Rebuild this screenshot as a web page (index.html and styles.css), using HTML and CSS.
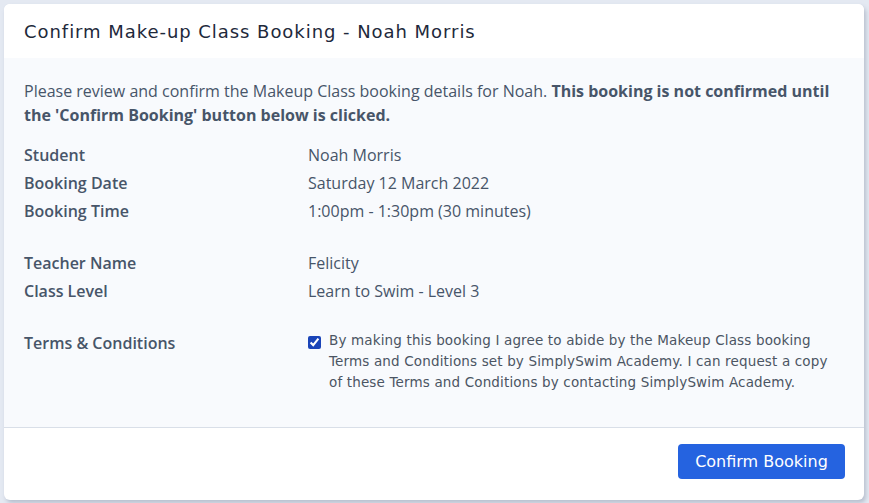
FILE: index.html
```html
<!DOCTYPE html>
<html lang="en">
<head>
    <meta charset="UTF-8">
    <meta name="viewport" content="width=device-width, initial-scale=1.0">
    <title>Confirm Make-up Class Booking</title>
    <link rel="stylesheet" href="styles.css">
</head>
<body>
    <div class="modal">
        <div class="modal-header">
            <h2>Confirm Make-up Class Booking - Noah Morris</h2>
        </div>

        <div class="modal-body">
            <p class="intro">Please review and confirm the Makeup Class booking details for Noah. <strong>This booking is not confirmed until the 'Confirm Booking' button below is clicked.</strong></p>

            <div class="details">
                <div class="row">
                    <div class="label">Student</div>
                    <div class="value">Noah Morris</div>
                </div>
                <div class="row">
                    <div class="label">Booking Date</div>
                    <div class="value">Saturday 12 March 2022</div>
                </div>
                <div class="row">
                    <div class="label">Booking Time</div>
                    <div class="value">1:00pm - 1:30pm (30 minutes)</div>
                </div>
            </div>

            <div class="details">
                <div class="row">
                    <div class="label">Teacher Name</div>
                    <div class="value">Felicity</div>
                </div>
                <div class="row">
                    <div class="label">Class Level</div>
                    <div class="value">Learn to Swim - Level 3</div>
                </div>
            </div>

            <div class="details">
                <div class="row terms">
                    <div class="label">Terms &amp; Conditions</div>
                    <label class="agree">
                        <input type="checkbox" checked>
                        <span>By making this booking I agree to abide by the Makeup Class booking Terms and Conditions set by SimplySwim Academy. I can request a copy of these Terms and Conditions by contacting SimplySwim Academy.</span>
                    </label>
                </div>
            </div>
        </div>

        <div class="modal-footer">
            <button class="btn-primary">Confirm Booking</button>
        </div>
    </div>
</body>
</html>
```

FILE: styles.css
```css
* {
    margin: 0;
    padding: 0;
    box-sizing: border-box;
}

body {
    background: #e4e9f2;
    padding: 4px;
    font-family: "Open Sans", sans-serif;
    color: #475569;
}

.modal {
    width: 860px;
    height: 496px;
    background: #fff;
    border-radius: 6px;
    box-shadow: 2px 3px 4px rgba(100, 116, 139, 0.35);
    display: flex;
    flex-direction: column;
    overflow: hidden;
}

.modal-header {
    height: 54px;
    padding: 0 20px;
    display: flex;
    align-items: center;
    background: #fff;
}

.modal-header h2 {
    font-family: "DejaVu Sans", sans-serif;
    font-size: 18px;
    font-weight: 500;
    color: #1e293b;
    letter-spacing: 0.95px;
}

.modal-body {
    flex: 1;
    background: #f8fafd;
    border-bottom: 1px solid #d9dfe8;
    padding: 21px 20px 0;
}

.intro {
    font-size: 16px;
    line-height: 24px;
    margin-bottom: 14px;
}

.intro strong {
    font-weight: 700;
}

.details {
    margin-bottom: 24px;
}

.row {
    display: grid;
    grid-template-columns: 284px 1fr;
    font-size: 16px;
    line-height: 28px;
}

.label {
    font-weight: 600;
}

.agree {
    display: flex;
    align-items: flex-start;
    gap: 8px;
    padding-top: 1px;
    font-family: "DejaVu Sans", sans-serif;
    font-size: 13.5px;
    line-height: 21px;
    letter-spacing: 0.15px;
    color: #4b5563;
}

.agree input {
    width: 13px;
    height: 13px;
    margin-top: 6px;
    flex-shrink: 0;
    accent-color: #1a44b8;
}

.modal-footer {
    height: 72px;
    padding: 16px 19px 0;
    display: flex;
    justify-content: flex-end;
    align-items: flex-start;
}

.btn-primary {
    width: 167px;
    height: 35px;
    border: none;
    border-radius: 4px;
    background: #2563e0;
    color: #fff;
    font-family: "DejaVu Sans", sans-serif;
    font-size: 16px;
    cursor: pointer;
}
```
